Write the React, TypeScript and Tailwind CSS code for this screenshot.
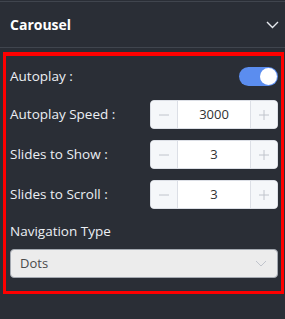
import React from "react";

function Stepper({ value }: { value: string }) {
  return (
    <div className="flex h-[29px] w-[128px] overflow-hidden rounded-[4px] border border-[#dcdfe6] bg-white">
      <button className="flex w-[27px] items-center justify-center border-r border-[#dcdfe6] bg-[#f5f7fa]">
        <svg width="12" height="12" viewBox="0 0 12 12">
          <path d="M1 6h10" stroke="#c0c4cc" strokeWidth="1" />
        </svg>
      </button>
      <div className="flex flex-1 items-center justify-center text-[13px] text-[#303133]">
        {value}
      </div>
      <button className="flex w-[27px] items-center justify-center border-l border-[#dcdfe6] bg-[#f5f7fa]">
        <svg width="12" height="12" viewBox="0 0 12 12">
          <path d="M1 6h10M6 1v10" stroke="#c0c4cc" strokeWidth="1" />
        </svg>
      </button>
    </div>
  );
}

export default function App() {
  return (
    <div className="h-[319px] w-[285px] bg-[#2a2e36] font-['Open_Sans',sans-serif] text-[#eceff4]">
      <div className="h-px" />
      <div className="h-px bg-[#40454e]" />

      {/* Header */}
      <div className="flex h-[46px] items-center justify-between border-b border-[#40454e] pl-[10px] pr-[6px]">
        <span className="text-[14px] font-bold text-white">Carousel</span>
        <svg width="13" height="8" viewBox="0 0 13 8" fill="none">
          <path d="M1 1l5.5 5.5L12 1" stroke="#e6e9ee" strokeWidth="1.4" />
        </svg>
      </div>

      {/* Settings */}
      <div className="ml-[3px] mt-1 w-[281px] border-[3px] border-t-4 border-[#ff0000] pb-[13px] pl-1 pr-[3px] pt-[11px]">
        <div className="flex h-[19px] items-center justify-between text-[13.5px]">
          <span>Autoplay :</span>
          <div className="flex h-[19px] w-[39px] items-center justify-end rounded-full bg-[#5b8def] pr-[1px]">
            <div className="h-[17px] w-[17px] rounded-full bg-white" />
          </div>
        </div>

        <div className="mt-[14px] flex flex-col gap-[11px]">
          {[
            ["Autoplay Speed :", "3000"],
            ["Slides to Show :", "3"],
            ["Slides to Scroll :", "3"],
          ].map(([label, v]) => (
            <div key={label} className="flex items-center justify-between text-[13.5px]">
              <span>{label}</span>
              <Stepper value={v} />
            </div>
          ))}
        </div>

        <div className="mt-3 h-5 text-[13.5px] leading-5">Navigation Type</div>

        <div className="mt-2 flex h-[29px] items-center justify-between rounded-[4px] border border-[#a3a8b0] bg-[#ececec] pl-[9px] pr-[10px]">
          <span className="text-[13px] text-[#4a4a4a]">Dots</span>
          <svg width="12" height="7" viewBox="0 0 12 7" fill="none">
            <path d="M1 1l5 5 5-5" stroke="#c0c4cc" strokeWidth="1" />
          </svg>
        </div>
      </div>
    </div>
  );
}
